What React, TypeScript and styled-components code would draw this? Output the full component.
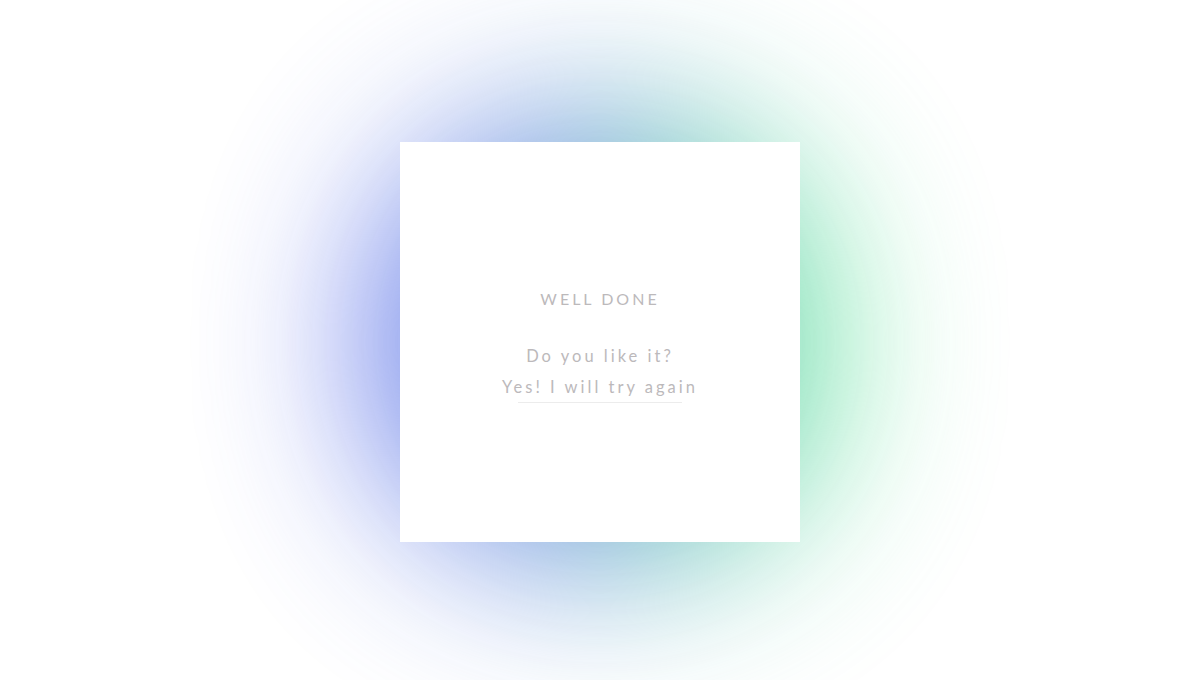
import * as React from "react";
import styled, { createGlobalStyle } from "styled-components";

const GlobalStyle = createGlobalStyle`
  html, body {
    margin: 0;
    padding: 0;
    background: #fff;
    overflow: hidden;
  }
`;

export default function App() {
  return (
    <>
      <GlobalStyle />
      <Page>
        <Card>
          <Title>WELL DONE</Title>
          <Question>Do you like it?</Question>
          <Answer>Yes! I will try again</Answer>
        </Card>
      </Page>
    </>
  );
}

const Page = styled.div`
  width: 1200px;
  height: 680px;
  display: flex;
  align-items: center;
  justify-content: center;
  padding-top: 4px;
  box-sizing: border-box;
  font-family: "Lato", "Open Sans", sans-serif;
`;

const Card = styled.div`
  position: relative;
  width: 400px;
  height: 400px;
  box-sizing: border-box;
  padding-top: 147px;
  background: #fff;
  display: flex;
  flex-direction: column;
  align-items: center;
  justify-content: flex-start;
  color: #bcb9bb;
  z-index: 0;

  &::before {
    content: "";
    position: absolute;
    inset: -25px -30px;
    border-radius: 45%;
    background: linear-gradient(90deg, #5563ee 0%, #6d95dc 45%, #4fd896 80%, #7ef0a8 100%);
    filter: blur(85px);
    opacity: 0.92;
    z-index: -2;
  }

  &::after {
    content: "";
    position: absolute;
    inset: 0;
    background: #fff;
    z-index: -1;
  }
`;

const Title = styled.h1`
  margin: 0 0 32px;
  font-size: 16px;
  font-weight: 400;
  letter-spacing: 3px;
  line-height: 20px;
`;

const Question = styled.p`
  margin: 0;
  font-size: 16.5px;
  letter-spacing: 3px;
  line-height: 31px;
`;

const Answer = styled.p`
  position: relative;
  margin: 0;
  font-size: 16.5px;
  letter-spacing: 3px;
  line-height: 31px;
  padding-bottom: 0;

  &::after {
    content: "";
    position: absolute;
    left: 8%;
    right: 8%;
    bottom: 0;
    border-bottom: 1px solid #ececec;
  }
`;
